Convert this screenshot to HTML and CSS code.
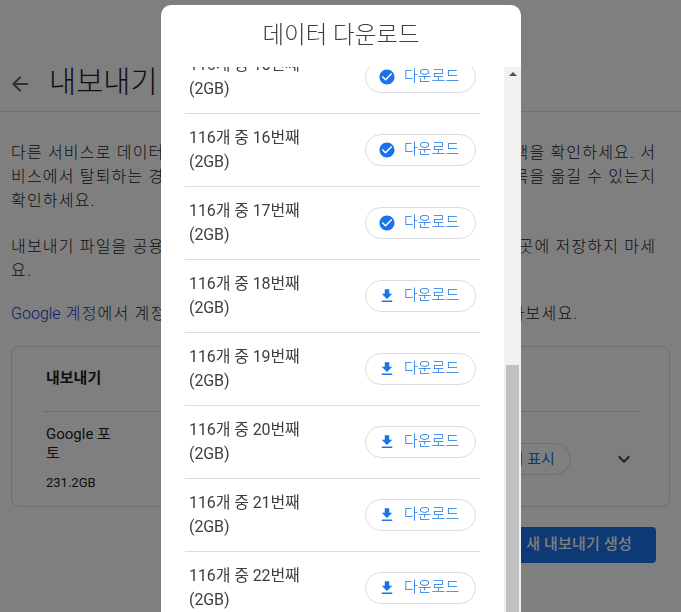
FILE: index.html
```html
<!DOCTYPE html>
<html lang="ko">
<head>
<meta charset="utf-8">
<title>데이터 다운로드</title>
<link rel="stylesheet" href="styles.css">
</head>
<body>
<div class="page">
  <header class="top">
    <svg class="back" viewBox="0 0 24 24"><path d="M20 11H7.83l5.59-5.59L12 4l-8 8 8 8 1.41-1.41L7.83 13H20v-2z"/></svg>
    <h1 class="page-title">내보내기</h1>
  </header>
  <main class="content">
    <p class="para para-a">다른 서비스로 데이터를 내보내기 전에 해당 서비스의 개인정보 보관정책을 확인하세요. 서<br>비스에서 탈퇴하는 경우 내보낸 데이터를 다른서비스로 계속해서 내 항목을 옮길 수 있는지<br>확인하세요.</p>
    <p class="para para-b">내보내기 파일을 공용 컴퓨터나다른 사용자들이 쉽게 액세스할 수 있는 곳에 저장하지 마세<br>요.</p>
    <p class="para para-c"><span class="link"><span class="latin">Google</span> 계정</span>에서 계정 데이터를 관리하는 다른 방법을 좀 더 자세히 알아보세요.</p>
    <section class="card">
      <h2 class="card-title">내보내기</h2>
      <div class="card-row">
        <div class="item">
          <div class="item-name">Google 포토</div>
          <div class="item-size">231.2GB</div>
        </div>
        <span class="show-btn">내보내기 표시</span>
        <svg class="chevron" viewBox="0 0 24 24"><path d="M16.59 8.59L12 13.17 7.41 8.59 6 10l6 6 6-6z"/></svg>
      </div>
    </section>
    <div class="actions"><span class="primary">새 내보내기 생성</span></div>
  </main>
</div>
<div class="overlay"></div>
<div class="modal">
  <h2 class="modal-title">데이터 다운로드</h2>
  <div class="modal-body">
    <div class="list">
      <div class="row row-first"><div class="row-label">116개 중 15번째<br>(2GB)</div><button class="dl"><svg class="dl-icon" viewBox="0 0 24 24"><path d="M12 2C6.48 2 2 6.48 2 12s4.48 10 10 10 10-4.48 10-10S17.52 2 12 2zm-2 15l-5-5 1.41-1.41L10 14.17l7.59-7.59L19 8l-9 9z"/></svg>다운로드</button></div>
      <div class="row"><div class="row-label">116개 중 16번째<br>(2GB)</div><button class="dl"><svg class="dl-icon" viewBox="0 0 24 24"><path d="M12 2C6.48 2 2 6.48 2 12s4.48 10 10 10 10-4.48 10-10S17.52 2 12 2zm-2 15l-5-5 1.41-1.41L10 14.17l7.59-7.59L19 8l-9 9z"/></svg>다운로드</button></div>
      <div class="row"><div class="row-label">116개 중 17번째<br>(2GB)</div><button class="dl"><svg class="dl-icon" viewBox="0 0 24 24"><path d="M12 2C6.48 2 2 6.48 2 12s4.48 10 10 10 10-4.48 10-10S17.52 2 12 2zm-2 15l-5-5 1.41-1.41L10 14.17l7.59-7.59L19 8l-9 9z"/></svg>다운로드</button></div>
      <div class="row"><div class="row-label">116개 중 18번째<br>(2GB)</div><button class="dl"><svg class="dl-icon" viewBox="0 0 24 24"><path d="M19 9h-4V3H9v6H5l7 7 7-7zM5 18v2h14v-2H5z"/></svg>다운로드</button></div>
      <div class="row"><div class="row-label">116개 중 19번째<br>(2GB)</div><button class="dl"><svg class="dl-icon" viewBox="0 0 24 24"><path d="M19 9h-4V3H9v6H5l7 7 7-7zM5 18v2h14v-2H5z"/></svg>다운로드</button></div>
      <div class="row"><div class="row-label">116개 중 20번째<br>(2GB)</div><button class="dl"><svg class="dl-icon" viewBox="0 0 24 24"><path d="M19 9h-4V3H9v6H5l7 7 7-7zM5 18v2h14v-2H5z"/></svg>다운로드</button></div>
      <div class="row"><div class="row-label">116개 중 21번째<br>(2GB)</div><button class="dl"><svg class="dl-icon" viewBox="0 0 24 24"><path d="M19 9h-4V3H9v6H5l7 7 7-7zM5 18v2h14v-2H5z"/></svg>다운로드</button></div>
      <div class="row"><div class="row-label">116개 중 22번째<br>(2GB)</div><button class="dl"><svg class="dl-icon" viewBox="0 0 24 24"><path d="M19 9h-4V3H9v6H5l7 7 7-7zM5 18v2h14v-2H5z"/></svg>다운로드</button></div>
    </div>
    <div class="scrollbar">
      <span class="arrow-up"></span>
      <span class="thumb"></span>
    </div>
  </div>
</div>
</body>
</html>
```
FILE: styles.css
```css
* { box-sizing: border-box; }
html, body { margin: 0; height: 100%; overflow: hidden; background: #fff; }
body { font-family: Roboto, "Noto Sans CJK KR", sans-serif; color: #202124; }
.page { width: 681px; height: 612px; overflow: hidden; }
.top { height: 112px; border-bottom: 1px solid #dadce0; display: flex; align-items: center; padding: 56px 0 0 8px; }
.back { width: 24px; height: 24px; fill: #5f6368; }
.page-title { margin: -4px 0 0 17px; font-size: 29.5px; font-weight: 300; line-height: 36px; white-space: nowrap; }
.content { padding: 0 11px; }
.para { margin: 0; font-size: 16px; line-height: 24px; letter-spacing: 1.2px; font-weight: 300; white-space: nowrap; }
.latin { letter-spacing: 0; }
.para-a { margin-top: 29px; }
.para-b { margin-top: 22px; }
.para-c { margin-top: 19px; }
.link { color: #1a3fc0; }
.card { margin-top: 20px; height: 161px; border: 1px solid #dadce0; border-radius: 8px; padding: 0 29px 0 31px; }
.card-title { margin: 0; padding: 19px 0 20px 3px; height: 65px; border-bottom: 1px solid #dadce0; font-size: 15px; line-height: 24px; font-weight: 700; }
.card-row { display: flex; align-items: center; padding: 0 0 0 3px; height: 94px; }
.item { width: 78px; }
.item-name { font-size: 15px; line-height: 19px; margin-top: -1px; }
.item-size { margin-top: 11px; font-size: 13px; line-height: 18px; }
.show-btn { margin-left: 328px; width: 119px; height: 32px; border: 1px solid #dadce0; border-radius: 16px; color: #1a73e8; font-size: 15px; line-height: 30px; text-align: center; white-space: nowrap; flex: none; }
.chevron { width: 24px; height: 24px; margin-left: 41px; fill: #3c4043; flex: none; }
.actions { display: flex; justify-content: flex-end; margin: 20px 14px 0 0; }
.primary { width: 240px; height: 36px; border-radius: 4px; background: #1a73e8; color: #fff; font-size: 15px; font-weight: 500; letter-spacing: .2px; line-height: 34px; text-align: right; padding-right: 24px; }
.overlay { position: fixed; inset: 0; background: rgba(0, 0, 0, .5); }
.modal { position: fixed; left: 161px; top: 5px; width: 360px; height: 640px; background: #fff; border-radius: 10px; display: flex; flex-direction: column; overflow: hidden; }
.modal-title { flex: none; height: 62px; margin: 0; text-align: center; font-size: 23.5px; font-weight: 300; line-height: 60px; color: #3c4043; }
.modal-body { flex: 1; min-height: 0; display: flex; }
.list { flex: 1; min-width: 0; overflow: hidden; padding: 0 24px; }
.row { display: flex; align-items: center; justify-content: space-between; height: 73px; border-bottom: 1px solid #dadce0; padding: 0 4px; }
.row-first { margin-top: -26px; }
.row-label { font-size: 16px; line-height: 24px; color: #3c4043; letter-spacing: -.1px; }
.dl { display: flex; align-items: center; width: 111px; height: 32px; padding: 0 0 6px 12px; background: #fff; border: 1px solid #dadce0; border-radius: 16px; color: #1a73e8; font: 300 15px Roboto, "Noto Sans CJK KR", sans-serif; flex: none; }
.dl-icon { width: 18px; height: 18px; margin: 6px 8px 0 0; fill: #1a73e8; flex: none; }
.scrollbar { flex: none; width: 17px; background: #f1f1f1; display: flex; flex-direction: column; align-items: center; justify-content: space-between; }
.arrow-up { margin-top: 5px; width: 0; height: 0; border-left: 4px solid transparent; border-right: 4px solid transparent; border-bottom: 4px solid #505050; }
.thumb { width: 13px; height: 280px; background: #c1c1c1; }
```
